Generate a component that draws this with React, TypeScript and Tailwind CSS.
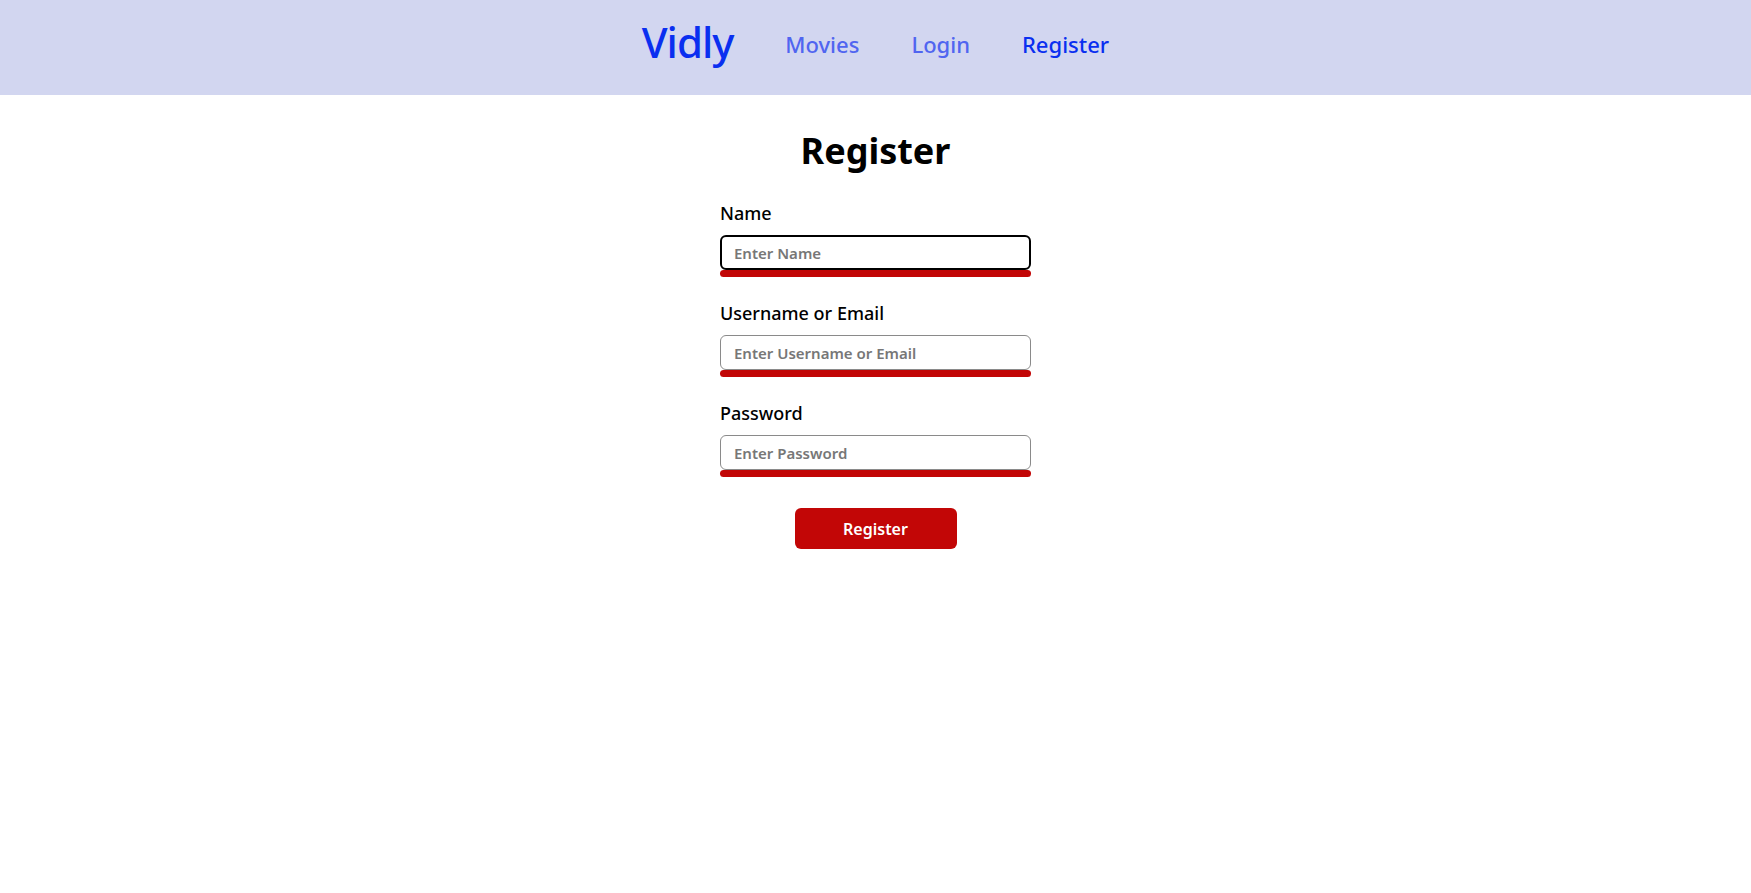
import type { ReactElement } from 'react'

const fields = [
  { label: 'Name', placeholder: 'Enter Name', focused: true },
  { label: 'Username or Email', placeholder: 'Enter Username or Email', focused: false },
  { label: 'Password', placeholder: 'Enter Password', focused: false },
]

export default function App(): ReactElement {
  return (
    <div className="min-h-screen bg-white font-['Noto_Sans',sans-serif] text-black">
      <header className="flex h-[95px] items-center justify-center bg-[#d2d6f0] pb-[11px]">
        <nav className="flex items-center gap-[52px]">
          <span className="text-[42px] font-medium leading-none tracking-tight text-[#0a2ff0]">Vidly</span>
          <span className="pt-1 text-[22px] font-medium text-[#5065f0]">Movies</span>
          <span className="pt-1 text-[22px] font-medium text-[#5065f0]">Login</span>
          <span className="pt-1 text-[22px] font-medium text-[#0a2ff0]">Register</span>
        </nav>
      </header>

      <main className="flex flex-col items-center pt-[38px]">
        <h1 className="text-[36px] font-bold leading-none">Register</h1>
        <form className="mt-[35px] flex w-[311px] flex-col" onSubmit={(e) => e.preventDefault()}>
          {fields.map((f) => (
            <div key={f.label} className="mb-[27px] flex flex-col">
              <label className="text-[18px] font-medium leading-none">{f.label}</label>
              <input
                placeholder={f.placeholder}
                className={
                  f.focused
                    ? 'mt-[13px] h-[35px] w-full rounded-[6px] border-2 border-black px-[12px] text-[15px] font-semibold outline-none placeholder:text-[#777]'
                    : 'mt-[13px] h-[35px] w-full rounded-[6px] border border-[#8a8a8a] px-[13px] text-[15px] font-semibold outline-none placeholder:text-[#777]'
                }
              />
              <div className="h-[7px] w-full rounded-full bg-[#c20606]" />
            </div>
          ))}
          <button
            type="submit"
            className="mx-auto mt-[4px] h-[41px] w-[162px] rounded-[6px] bg-[#c20606] text-[16px] font-semibold text-white"
          >
            Register
          </button>
        </form>
      </main>
    </div>
  )
}
